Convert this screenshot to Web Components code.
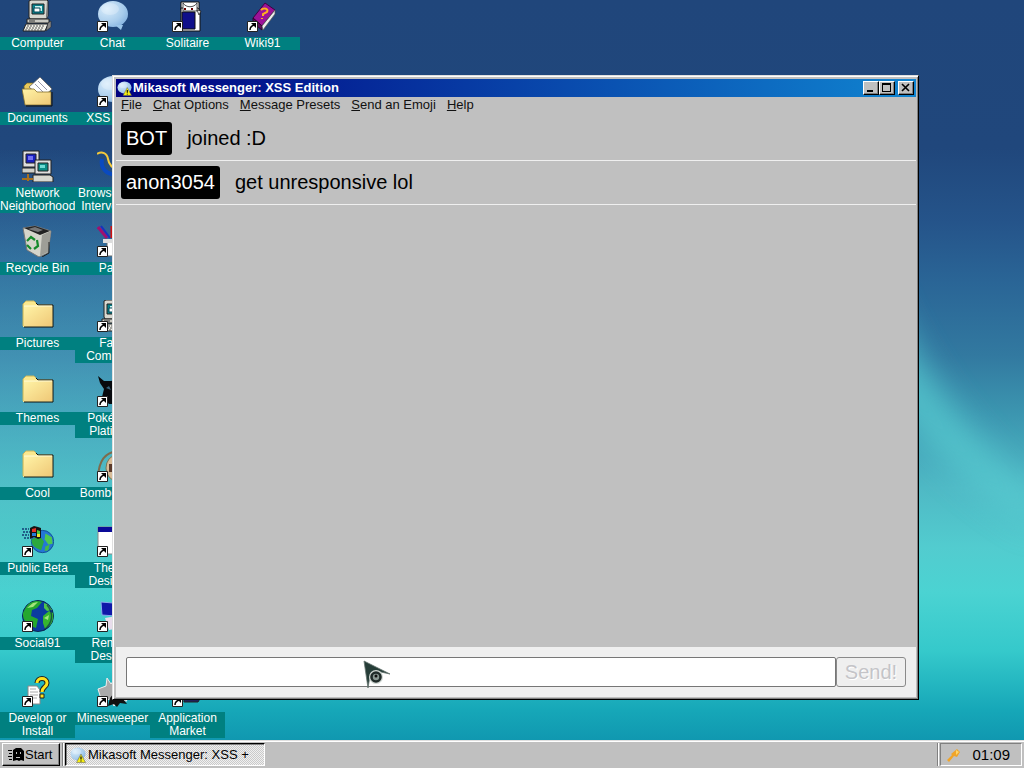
<!DOCTYPE html>
<html lang="en">
<head>
<meta charset="utf-8">
<title>Mikasoft Desktop</title>
<style>
html, body { height: 100%; margin: 0; }
body { font: 13px/16px "Liberation Sans", Arial, sans-serif; color: #000; overflow: hidden; }
</style>
</head>
<body>
<desktop-shell>
  <icon-grid>
    <desktop-icon icon="computer" style="grid-area:1/1">Computer</desktop-icon>
    <desktop-icon icon="folderopen" style="grid-area:2/1">Documents</desktop-icon>
    <desktop-icon icon="network" style="grid-area:3/1">Network Neighborhood</desktop-icon>
    <desktop-icon icon="recycle" style="grid-area:4/1">Recycle Bin</desktop-icon>
    <desktop-icon icon="folder" style="grid-area:5/1">Pictures</desktop-icon>
    <desktop-icon icon="folder" style="grid-area:6/1">Themes</desktop-icon>
    <desktop-icon icon="folder" style="grid-area:7/1">Cool</desktop-icon>
    <desktop-icon icon="beta" shortcut style="grid-area:8/1">Public Beta</desktop-icon>
    <desktop-icon icon="globe" shortcut style="grid-area:9/1">Social91</desktop-icon>
    <desktop-icon icon="develop" shortcut style="grid-area:10/1">Develop or Install</desktop-icon>
    <desktop-icon icon="chat" shortcut style="grid-area:1/2">Chat</desktop-icon>
    <desktop-icon icon="chat" shortcut style="grid-area:2/2">XSS Chat</desktop-icon>
    <desktop-icon icon="browser" style="grid-area:3/2">Browser War Intervention</desktop-icon>
    <desktop-icon icon="paint" shortcut style="grid-area:4/2">Paint</desktop-icon>
    <desktop-icon icon="computer" shortcut style="grid-area:5/2">Fake Computer</desktop-icon>
    <desktop-icon icon="dark" shortcut style="grid-area:6/2">Pokémon Platinum</desktop-icon>
    <desktop-icon icon="bomb" shortcut style="grid-area:7/2">Bomberman</desktop-icon>
    <desktop-icon icon="theme" shortcut style="grid-area:8/2">Theme Designer</desktop-icon>
    <desktop-icon icon="remote" shortcut style="grid-area:9/2">Remote Desktop</desktop-icon>
    <desktop-icon icon="mine" shortcut style="grid-area:10/2">Minesweeper</desktop-icon>
    <desktop-icon icon="cards" shortcut style="grid-area:1/3">Solitaire</desktop-icon>
    <desktop-icon icon="market" shortcut style="grid-area:10/3">Application Market</desktop-icon>
    <desktop-icon icon="book" shortcut style="grid-area:1/4">Wiki91</desktop-icon>
  </icon-grid>
  <app-window slot="window" caption="Mikasoft Messenger: XSS Edition">
    <menu-bar slot="menu" items="File|Chat Options|Message Presets|Send an Emoji|Help"></menu-bar>
    <chat-message from="BOT">joined :D</chat-message>
    <chat-message from="anon3054">get unresponsive lol</chat-message>
    <chat-composer slot="footer"></chat-composer>
  </app-window>
  <mouse-pointer slot="pointer"></mouse-pointer>
  <task-bar slot="taskbar" time="01:09">
    <task-button>Mikasoft Messenger: XSS +</task-button>
  </task-bar>
</desktop-shell>

<script>
const ART = {
  computer: `<path d="M7 1l2-1h16l1 1v15l-2 3H8l-1-2z" fill="#d8d8d0" stroke="#222" stroke-width="1"/><path d="M25 1l1 1v14l-2 3v-3z" fill="#777"/><path d="M10 4h12v10H10z" fill="#087f88" stroke="#222"/><path d="M13 6h7v5h-7z" fill="#cff4f0"/><path d="M12 8h6v4h-6z" fill="#fff" stroke="#045"/><path d="M5 19h22v4H5z" fill="#c9c9c2" stroke="#222"/><path d="M7 21h6" stroke="#333"/><path d="M4 24h22l-3 7H1z" fill="#eeeee6" stroke="#222"/><path d="M26 23l3-2v6l-5 4z" fill="#888" stroke="#222" stroke-width=".5"/><path d="M5 26h18M4 28h18M3 30h18" stroke="#555" stroke-dasharray="2 1"/>`,
  folder: `<path d="M1 4l3-3h8l4 4h15v22H1z" fill="#fbe88d"/><path d="M2 6h28v20H2z" fill="url(#fg)"/><path d="M1 26V4l3-3h8l4 4h14" fill="none" stroke="#c8b45c"/><path d="M14 3l2 2h15v22H2" fill="none" stroke="#111"/><path d="M2 6h28" stroke="#fffbd8"/>`,
  folderopen: `<path d="M2 11l3-3h6l3 3h14v14H3z" fill="#e8c95c" stroke="#776520" stroke-width=".7"/><path d="M7 12L18 2l12 12-10 9z" fill="#fff" stroke="#555" stroke-width=".7"/><path d="M13 9l8 8M16 6l9 9" stroke="#99a" stroke-width="1"/><path d="M0 14h12l3 3h14v13H3z" fill="url(#fg)" stroke="#85702c" stroke-width=".8"/><path d="M30 17v14H4" stroke="#111" fill="none"/>`,
  network: `<path d="M1 1h16v16H1z" fill="#dedede" stroke="#222"/><path d="M4 4h10v9H4z" fill="#1820c0" stroke="#222"/><path d="M6 6h5v4H6z" fill="#7070f0"/><path d="M0 18h16v5H0z" fill="#d0d0c8" stroke="#222"/><path d="M13 10h16v14H13z" fill="#dedede" stroke="#222"/><path d="M16 13h10v8H16z" fill="#0b8c86" stroke="#222"/><path d="M18 15h5v3h-5z" fill="#6edcd4"/><path d="M11 25h17l3 2v5H11z" fill="#d8d8d0" stroke="#222"/><path d="M0 29h11M6 24v7" stroke="#a9701c" stroke-width="2"/>`,
  recycle: `<path d="M1 3l12-2 16 5-3 22-9 4L5 25z" fill="#d5d5cb" stroke="#777"/><path d="M2 3l11-2 15 5-10 4z" fill="#222"/><path d="M6 4l7-2 8 3-5 2z" fill="#777"/><path d="M20 10l9-4-3 21-8 4z" fill="#9e9e97"/><path d="M5 16l4-4 4 3M15 15l1 6-4 3M9 24l-4-4" stroke="#158a2b" stroke-width="2.2" fill="none"/><path d="M27 17v11l-7 4" stroke="#222" fill="none"/>`,
  chat: `<ellipse cx="16" cy="14" rx="15" ry="13" fill="url(#bg)"/><path d="M18 25h8l-2 5z" fill="#9ac4e8"/><ellipse cx="13" cy="9" rx="9" ry="6" fill="#fff" opacity=".25"/>`,
  cards: `<path d="M9 2h18v8H9z" fill="#fff" stroke="#111"/><path d="M9 8h17l2 3v20H9z" fill="#fff" stroke="#111"/><path d="M10 12h13v17H10z" fill="#10108a" stroke="#111"/><path d="M11 3c3 5 11 5 14 0v8H11z" fill="#fff" stroke="#222" stroke-width=".8"/><path d="M12 8h2v2h-2zM19 8h2v2h-2z" fill="#600"/><path d="M25 10l4 1-2 4z" fill="#eee" stroke="#111" stroke-width=".7"/>`,
  book: `<path d="M6 18L18 3l10 7-13 16z" fill="#9c1298" stroke="#400040"/><path d="M6 18l9 8v4l-9-7z" fill="#60105c" stroke="#300030"/><path d="M15 26l13-16v4L16 30z" fill="#eee" stroke="#555" stroke-width=".7"/><path d="M14 10c3-3 8-1 6 2l-4 2v2M15 18v1" fill="none" stroke="#ffb020" stroke-width="2"/>`,
  browser: `<path d="M5 9c-2 9 5 17 16 15 6-1 9-5 9-10" fill="none" stroke="#0a4ac0" stroke-width="4"/><path d="M0 4c5-3 10-1 11 5 1 6 4 9 10 11" fill="none" stroke="#f4c93a" stroke-width="2"/>`,
  paint: `<path d="M1 2l9 11" stroke="#a01070" stroke-width="3"/><path d="M4 1l9 12" stroke="#1830c0" stroke-width="2"/><path d="M15 1v12" stroke="#d01010" stroke-width="3"/><path d="M10 17h19v14H10z" fill="#fff" stroke="#666"/><path d="M6 14h20v4H6z" fill="#ddd"/>`,
  dark: `<path d="M1 1l6 5h7c8-3 14 5 17 12v11H12L5 22l2-8-4-6z" fill="#07090d"/><path d="M9 13l3-2 2 4z" fill="#355f78"/>`,
  bomb: `<path d="M1 27C2 10 8 3 20 1" stroke="#7e6b4c" stroke-width="2" fill="none"/><ellipse cx="20" cy="18" rx="11" ry="13" fill="#d9bd99" stroke="#775"/><path d="M12 14h18v8H12z" fill="#5b3a2b"/>`,
  theme: `<path d="M1 2h30v27H1z" fill="#fff" stroke="#888"/><path d="M1 2h30v5H1z" fill="#0a0a98"/>`,
  remote: `<path d="M4 2l12 1 3 13-14-1z" fill="#1018a8" stroke="#8ae"/><path d="M8 18l17-3 4 12-17 3z" fill="#e8ddec"/>`,
  mine: `<path d="M1 14l8-3 1-8 4 6 6-8 2 9 9 3-5 7 4 6-8-1-5 6-4-7-8 3z" fill="#aaa" stroke="#eee"/><path d="M13 23l4-5 5 4 7-2-3 4 4 5-7-1-3 4-3-3-6 2z" fill="#111"/>`,
  market: `<path d="M12 6h17v16l-3 5H12z" fill="#20205a" stroke="#222"/>`,
  globe: `<circle cx="16" cy="16" r="15.5" fill="#0b3ba0" stroke="#082850"/><path d="M3 9C7 1 15 0 20 2l-5 6-5 2-1 6 7 3-2 9c-7-2-14-7-13-15z" fill="#25a72e"/><path d="M21 16l6-5 4 2c1 8-2 13-8 16l-2-6z" fill="#36b52f"/><path d="M22 3c4 1 6 4 8 7l-5 1-3-3z" fill="#4cc44a"/><path d="M5 8l6-5 5-1-5 5zM22 18l5-3-1 5z" fill="#a4e57c"/><path d="M25 5c7 8 6 18-3 25" fill="none" stroke="#052050" stroke-width="1.5" opacity=".6"/>`,
  beta: `<g transform="translate(9 5) scale(.72)"><circle cx="16" cy="16" r="15.5" fill="#2477d4" stroke="#073a80"/><path d="M1 13l11-5 6 8-4 12C5 25 0 21 1 13z" fill="#2ca83e"/><path d="M20 5l9 5 1 9-6 1-5-7z" fill="#4dc94f"/><path d="M20 23l6-3-2 8-5 1z" fill="#43b946"/></g><path d="M8 3l4-2 4 1v12l-4-2-4 2z" fill="#151515"/><path d="M10 4l4-1v4h-4z" fill="#e83225"/><path d="M16 2l3 1v10l-3 1z" fill="#151515"/><path d="M15 5l3 1v3h-3z" fill="#4fc73a"/><path d="M10 8h4v3h-4z" fill="#247bd8"/><path d="M15 9h3v3h-3z" fill="#f4df26"/><path d="M0 4h7M1 7h7M0 10h7M2 13h6" stroke="#123d75" stroke-width="1.5" stroke-dasharray="2 1"/>`,
  develop: `<path d="M6 11h9l3 4v14H6z" fill="#fff" stroke="#888"/><path d="M8 14h6M8 17h8M8 20h8M8 23h7" stroke="#aaa"/><path d="M15 8c0-6 10-6 10 0 0 4-5 4-5 9" fill="none" stroke="#222" stroke-width="5"/><path d="M15 8c0-6 10-6 10 0 0 4-5 4-5 9" fill="none" stroke="#ffe21c" stroke-width="3"/><path d="M18 19h4v4h-4z" fill="#ffe21c" stroke="#222"/>`,
  warn: `<path d="M22 14l9 17H13z" fill="#f7ef12" stroke="#555"/><path d="M22 19v6M22 27v2" stroke="#111" stroke-width="2.5"/>`
};
const DEFS = `<defs><linearGradient id="fg" x2="1" y2="1"><stop stop-color="#fff3a6"/><stop offset="1" stop-color="#efc877"/></linearGradient><radialGradient id="bg" cx=".3" cy=".3" r=".9"><stop stop-color="#d8ecfb"/><stop offset=".6" stop-color="#a9cdec"/><stop offset="1" stop-color="#79aadc"/></radialGradient></defs>`;
const LINK = `<path d="M.5 21.5h10v10H.5z" fill="#fff" stroke="#222"/><path d="M3 30c0-3 1-4 4-5" stroke="#000" stroke-width="1.5" fill="none"/><path d="M4 23h5v5z" fill="#000"/>`;
const picture = (art, size) => `<svg width="${size}" height="${size}" viewBox="0 0 32 32" aria-hidden="true">${DEFS}${art}</svg>`;

function define(name, render) {
  customElements.define(name, class extends HTMLElement {
    constructor() {
      super();
      this.attachShadow({ mode: "open" });
    }
    connectedCallback() {
      this.shadowRoot.innerHTML = render(this);
    }
  });
}

define("desktop-shell", () => `<style>
:host { display: flex; flex-direction: column; height: 100vh; }
.area { position: relative; flex: 1; min-height: 0; overflow: hidden;
  background: linear-gradient(#20467b 0, #20477c 20%, #25548a 30%, #2a6596 38%, #3279a0 48%, #3c96b0 56%, #4fb9c5 66%, #52cccf 74%, #4bd3d2 80%, #35c9cb 88%, #16a7b8 96%, #1098b0 100%); }
.light { position: absolute; inset: 0; width: 100%; height: 100%; }
</style>
<div class="area">
<svg class="light" viewBox="0 0 1024 740" preserveAspectRatio="none" aria-hidden="true">
<defs><filter id="soft" x="-50%" y="-50%" width="200%" height="200%"><feGaussianBlur stdDeviation="16"/></filter>
<linearGradient id="haze" x1="0" x2="0" y1="0" y2="1"><stop offset=".2" stop-color="#5ab8d0" stop-opacity="0"/><stop offset=".5" stop-color="#5ab8d0" stop-opacity=".4"/><stop offset=".7" stop-color="#4cc8c8" stop-opacity=".6"/><stop offset=".85" stop-color="#3cc8c8" stop-opacity="0"/></linearGradient></defs>
<path d="M0 0h200v740H0z" fill="url(#haze)"/>
<path d="M880 280C920 370 960 430 1040 500L1040 530C970 490 910 430 880 390z" fill="#58cdd2" opacity=".75" filter="url(#soft)"/>
</svg>
<slot></slot><slot name="window"></slot><slot name="pointer"></slot></div>
<slot name="taskbar"></slot>`);

define("icon-grid", () => `<style>
:host { display: grid; grid-template-columns: repeat(4, 75px); grid-template-rows: repeat(10, 75px); position: absolute; top: 0; left: 0; }
</style><slot></slot>`);

define("desktop-icon", el => `<style>
:host { display: block; min-width: 0; }
a { display: flex; flex-direction: column; align-items: center; gap: 5px; color: #fff; text-decoration: none; font-size: 12px; line-height: 13px; }
svg { display: block; }
span { align-self: stretch; background: #008080; text-align: center; }
</style><a href="#">${picture(ART[el.getAttribute("icon")] + (el.hasAttribute("shortcut") ? LINK : ""), 32)}<span><slot></slot></span></a>`);

define("app-window", el => `<style>
:host { position: absolute; inset: 75px 105px 40px 112px; display: flex; flex-direction: column; box-sizing: border-box;
  border: 1px solid; border-color: #dfdfdf #000 #000 #dfdfdf; box-shadow: inset 1px 1px #fff, inset -1px -1px #808080; padding: 3px 2px 2px 3px; background: #c0c0c0; }
header { display: flex; align-items: center; height: 18px; padding: 0 2px 0 1px; color: #fff;
  background: linear-gradient(90deg, #000080, #1084d0); }
h1 { flex: 1; margin: 0; padding-left: 1px; font-size: 13px; line-height: 18px; font-weight: bold; }
button { width: 16px; height: 14px; padding: 0; display: grid; place-items: center; border: 1px solid; border-color: #fff #000 #000 #fff; background: #c0c0c0; box-shadow: inset -1px -1px #808080; }
button:last-child { margin-left: 3px; }
svg { display: block; }
main { flex: 1; min-height: 0; }
</style>
<header>${picture(ART.chat + ART.warn, 15)}<h1>${el.getAttribute("caption")}</h1>
<button aria-label="Minimize"><svg width="10" height="10"><path d="M1 7h6v2H1z"/></svg></button>
<button aria-label="Maximize"><svg width="10" height="10"><path d="M0 0h9v9H0zM1 2v6h7V2z" fill-rule="evenodd"/></svg></button>
<button aria-label="Close"><svg width="10" height="10"><path d="M1 1l7 7M8 1L1 8" stroke="#000" stroke-width="1.6"/></svg></button></header>
<slot name="menu"></slot><main><slot></slot></main><slot name="footer"></slot>`);

define("menu-bar", el => `<style>
:host { display: block; }
nav { display: flex; gap: 11px; height: 20px; padding-left: 5px; }
button { border: 0; padding: 0; background: none; font: inherit; line-height: 16px; height: 16px; color: #111; }
</style><nav>${el.getAttribute("items").split("|").map(t => `<button><u>${t[0]}</u>${t.slice(1)}</button>`).join("")}</nav>`);

define("chat-message", el => `<style>
:host { display: flex; align-items: center; gap: 15px; padding: 5px; border-bottom: 1px solid #efefef; font-size: 20px; line-height: 23px; }
b { font-weight: normal; background: #000; color: #fff; border-radius: 3px; padding: 5px; }
</style><b>${el.getAttribute("from")}</b><span><slot></slot></span>`);

define("chat-composer", () => `<style>
:host { display: block; background: #efefef; }
form { display: flex; padding: 10px; }
input { flex: 1; min-width: 0; height: 30px; box-sizing: border-box; border: 1px solid #767676; border-radius: 2px; background: #fff; font: inherit; font-size: 20px; }
button { width: 70px; height: 30px; box-sizing: border-box; padding: 0; border: 1px solid #8a8a8a; border-radius: 3px; background: #efefef; color: #c4c4c8; font: inherit; font-size: 20px; text-shadow: 1px 1px #fff; }
</style><form><input type="text" aria-label="Message"><button disabled>Send!</button></form>`);

define("mouse-pointer", () => `<style>
:host { position: absolute; left: 363px; top: 660px; pointer-events: none; }
svg { display: block; }
</style><svg width="30" height="30" viewBox="0 0 30 30" aria-hidden="true"><path d="M1 1l26 13-14-3-6 5-2 12z" fill="#263d38" stroke="#65736f" stroke-width=".8"/><circle cx="13" cy="17" r="7" fill="#cfd6d2"/><circle cx="13" cy="17" r="4.5" fill="#8a9893" stroke="#202b29" stroke-width="2.6"/><circle cx="13" cy="16" r="1.5" fill="#111"/></svg>`);

define("task-bar", el => `<style>
:host { display: flex; box-sizing: border-box; height: 28px; padding: 2px; gap: 2px; background: #c0c0c0; border-top: 1px solid #dfdfdf; box-shadow: inset 0 1px #fff; }
.start { display: flex; align-items: center; width: 58px; padding: 0 5px; box-sizing: border-box; border: 1px solid; border-color: #fff #000 #000 #fff; box-shadow: inset -1px -1px #808080; background: #c0c0c0; font: inherit; color: #000; }
svg { flex: none; }
i { width: 1px; background: #808080; box-shadow: 1px 0 #fff; }
.tray { display: flex; align-items: center; justify-content: space-between; width: 82px; box-sizing: border-box; padding: 0 11px 0 5px; border: 1px solid; border-color: #808080 #fff #fff #808080; font-size: 15px; }
slot { display: flex; flex: 1; }
</style>
<button class="start"><svg width="17" height="14" viewBox="0 0 17 14" aria-hidden="true"><path d="M5 2l3-2h5l3 3v10l-3-1-2 1-2-1-4 1zM0 2h4v1H0zM1 5h3v1H1zM0 8h4v1H0zM1 11h3v1H1z" fill="#000"/><path d="M8 4h1v2H8zM12 4h1v2h-1zM8 9h4v1H8z" fill="#c0c0c0"/></svg>Start</button><i></i>
<slot></slot><i></i>
<div class="tray"><svg width="16" height="16" viewBox="0 0 16 16" aria-hidden="true"><path d="M1 13l5-5-1-1 6-5 3 3-3 5-3-1-5 6z" fill="#f0a428"/><path d="M10 3l3 2-3 3z" fill="#ffd668"/></svg><time>${el.getAttribute("time")}</time></div>`);

define("task-button", () => `<style>
:host { display: flex; }
button { display: flex; align-items: center; gap: 2px; width: 200px; padding: 0 4px; box-sizing: border-box; border: 1px solid; border-color: #000 #fff #fff #000; box-shadow: inset 1px 1px #808080; background: repeating-conic-gradient(#f0f0f0 0 25%, #cacaca 0 50%) 0 0 / 2px 2px; font: inherit; color: #000; white-space: nowrap; }
svg { flex: none; }
</style><button>${picture(ART.chat + ART.warn, 16)}<span><slot></slot></span></button>`);
</script>
</body>
</html>
